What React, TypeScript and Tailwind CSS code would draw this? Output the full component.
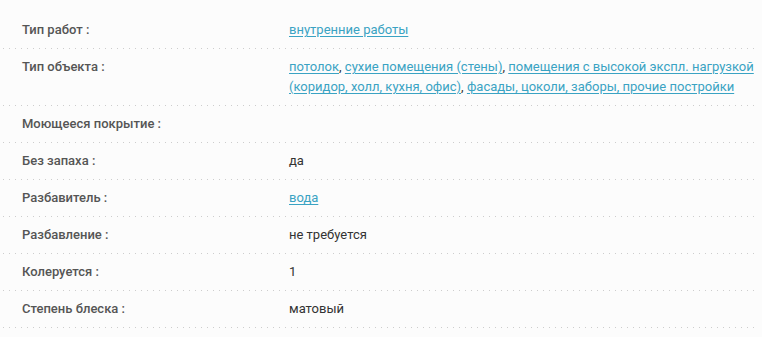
import React from "react";

type Part = { t: string; link?: boolean };
type Row = { label: string; value: Part[] };

const L = (t: string): Part => ({ t, link: true });
const T = (t: string): Part => ({ t });

const rows: Row[] = [
  { label: "Тип работ :", value: [L("внутренние работы")] },
  {
    label: "Тип объекта :",
    value: [
      L("потолок"),
      T(", "),
      L("сухие помещения (стены)"),
      T(", "),
      L("помещения с высокой экспл. нагрузкой (коридор, холл, кухня, офис)"),
      T(", "),
      L("фасады, цоколи, заборы, прочие постройки"),
    ],
  },
  { label: "Моющееся покрытие :", value: [] },
  { label: "Без запаха :", value: [T("да")] },
  { label: "Разбавитель :", value: [L("вода")] },
  { label: "Разбавление :", value: [T("не требуется")] },
  { label: "Колеруется :", value: [T("1")] },
  { label: "Степень блеска :", value: [T("матовый")] },
];

export default function App() {
  return (
    <div
      className="w-[762px] h-[337px] overflow-hidden bg-[#fcfcfc] pt-[12px] text-[13px] leading-[20px]"
      style={{ fontFamily: "Roboto, 'Liberation Sans', sans-serif" }}
    >
      {rows.map((r, i) => (
        <div
          key={i}
          className="flex pt-[8px] pb-[9px] mr-[6px] bg-[linear-gradient(to_right,#cdcdcd_1px,transparent_1px)] bg-[length:6px_1px] bg-repeat-x bg-bottom"
        >
          <div className="w-[289px] pl-[22px] shrink-0 font-medium text-[#555555]">
            {r.label}
          </div>
          <div className="w-[467px] text-[#333333]">
            {r.value.map((p, j) =>
              p.link ? (
                <a key={j} href="#" className="text-[#3aa3c3] underline underline-offset-2">
                  {p.t}
                </a>
              ) : (
                <span key={j}>{p.t}</span>
              )
            )}
          </div>
        </div>
      ))}
    </div>
  );
}
